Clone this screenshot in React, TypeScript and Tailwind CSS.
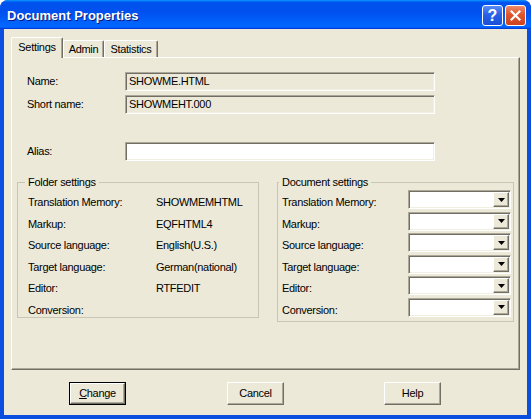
import React from "react";

const sunken =
  "border border-t-[#ACA899] border-l-[#ACA899] border-b-white border-r-white shadow-[inset_1px_1px_0_#716F64,inset_-1px_-1px_0_#F1EFE2]";
const raised =
  "border border-t-white border-l-white border-b-[#716F64] border-r-[#716F64] shadow-[inset_-1px_-1px_0_#ACA899]";

function Field({ value, white }: { value: string; white?: boolean }) {
  return (
    <div
      className={`w-[310px] h-[19px] ${sunken} ${white ? "bg-white" : "bg-[#ECE9D8]"} pl-[3px] flex items-center leading-[13px]`}
    >
      {value}
    </div>
  );
}

function Combo() {
  return (
    <div className={`w-[103px] h-[19px] bg-white ${sunken} p-[1px] flex justify-end`}>
      <div className={`w-[16px] h-full bg-[#ECE9D8] ${raised} flex items-center justify-center`}>
        <svg width="7" height="4" viewBox="0 0 7 4">
          <path d="M0 0H7L3.5 4Z" fill="#000" />
        </svg>
      </div>
    </div>
  );
}

const folderRows: [string, string][] = [
  ["Translation Memory:", "SHOWMEMHTML"],
  ["Markup:", "EQFHTML4"],
  ["Source language:", "English(U.S.)"],
  ["Target language:", "German(national)"],
  ["Editor:", "RTFEDIT"],
  ["Conversion:", ""],
];

const docRows = [
  "Translation Memory:",
  "Markup:",
  "Source language:",
  "Target language:",
  "Editor:",
  "Conversion:",
];

function Button({ children, def }: { children: React.ReactNode; def?: boolean }) {
  const inner = (
    <div className={`w-full h-full bg-[#ECE9D8] ${raised} flex items-center justify-center leading-[13px]`}>
      {children}
    </div>
  );
  if (def)
    return <div className="w-[57px] h-[23px] border border-black">{inner}</div>;
  return <div className="w-[57px] h-[23px]">{inner}</div>;
}

export default function App() {
  return (
    <div
      className="w-[531px] h-[419px] flex flex-col rounded-t-[8px] overflow-hidden bg-[#0A4FE0] text-[11px] tracking-[-0.3px] text-black"
      style={{ fontFamily: '"Liberation Sans", Arial, sans-serif' }}
    >
      {/* Title bar */}
      <div className="h-[29px] shrink-0 flex bg-[linear-gradient(180deg,#0997ff,#0053ee_8%,#0050ee_40%,#0066ff_88%,#0066ff_93%,#005bff_95%,#003dd7_96%,#003dd7)]">
        <div className="pl-[7px] pt-[8px] text-white font-bold text-[13px] tracking-normal leading-[15px] [text-shadow:1px_1px_0_#0A1883]">
          Document Properties
        </div>
        <div className="ml-auto mr-[5px] mt-[5px] flex gap-[2px]">
          <div className="w-[21px] h-[21px] rounded-[3px] border border-white bg-[linear-gradient(180deg,#5A8DF5,#2A61E8_45%,#1A4ED8)] flex items-center justify-center text-white font-bold text-[16px] leading-none tracking-normal">
            ?
          </div>
          <div className="w-[21px] h-[21px] rounded-[3px] border border-white bg-[linear-gradient(180deg,#EE8B6A,#E0542C_45%,#CC4420)] flex items-center justify-center">
            <svg width="11" height="11" viewBox="0 0 11 11">
              <path d="M1.5 1.5L9.5 9.5M9.5 1.5L1.5 9.5" stroke="#fff" strokeWidth="2.2" strokeLinecap="square" />
            </svg>
          </div>
        </div>
      </div>

      {/* Body */}
      <div className="flex-1 mx-[4px] mb-[4px] bg-[#ECE9D8] flex flex-col">
        {/* Tabs */}
        <div className="h-[28px] pl-[7px] flex items-end">
          <div className="relative z-10 w-[52px] h-[21px] -mb-[1px] bg-[#ECE9D8] border-t border-l border-r border-t-white border-l-white border-r-[#716F64] rounded-t-[2px] pt-[3px] flex justify-center leading-[13px] shadow-[inset_-1px_0_0_#ACA899]">
            Settings
          </div>
          <div className="w-[41px] h-[17px] border-t border-l border-r border-t-white border-l-white border-r-[#716F64] rounded-t-[2px] pt-[2px] flex justify-center leading-[13px] shadow-[inset_-1px_0_0_#ACA899]">
            Admin
          </div>
          <div className="w-[54px] h-[17px] border-t border-l border-r border-t-white border-l-white border-r-[#716F64] rounded-t-[2px] pt-[2px] flex justify-center leading-[13px] shadow-[inset_-1px_0_0_#ACA899]">
            Statistics
          </div>
        </div>

        {/* Panel */}
        <div className={`mx-[7px] h-[313px] ${raised} flex flex-col`}>
          <div className="mt-[14px] pl-[15px] flex items-center">
            <div className="w-[98px]">Name:</div>
            <Field value="SHOWME.HTML" />
          </div>
          <div className="mt-[4px] pl-[15px] flex items-center">
            <div className="w-[98px]">Short name:</div>
            <Field value="SHOWMEHT.000" />
          </div>
          <div className="mt-[28px] pl-[15px] flex items-center">
            <div className="w-[98px]">Alias:</div>
            <Field value="" white />
          </div>

          <div className="mt-[15px] flex items-start">
            <fieldset className="ml-[5px] w-[242px] h-[142px] border border-[#C8C6B4] pl-[7px]">
              <legend className="px-[3px] leading-[13px]">Folder settings</legend>
              <div className="mt-[1px] ml-[3px] flex flex-col">
                {folderRows.map(([l, v]) => (
                  <div key={l} className="h-[21.5px] flex items-start">
                    <div className="w-[128px] pt-[6px] leading-[13px]">{l}</div>
                    <div className="pt-[6px] leading-[13px]">{v}</div>
                  </div>
                ))}
              </div>
            </fieldset>
            <fieldset className="ml-[18px] w-[237px] h-[146px] border border-[#C8C6B4] pl-[1px]">
              <legend className="px-[3px] leading-[13px]">Document settings</legend>
              <div className="mt-[1px] ml-[3px] flex flex-col">
                {docRows.map((l) => (
                  <div key={l} className="h-[21.5px] flex items-start">
                    <div className="w-[126px] pt-[6px] leading-[13px]">{l}</div>
                    <Combo />
                  </div>
                ))}
              </div>
            </fieldset>
          </div>
        </div>

        {/* Buttons */}
        <div className="mt-[12px] pl-[65px] flex">
          <Button def>
            <span>
              <span className="underline">C</span>hange
            </span>
          </Button>
          <div className="ml-[101px]">
            <Button>Cancel</Button>
          </div>
          <div className="ml-[100px]">
            <Button>Help</Button>
          </div>
        </div>
      </div>
    </div>
  );
}
